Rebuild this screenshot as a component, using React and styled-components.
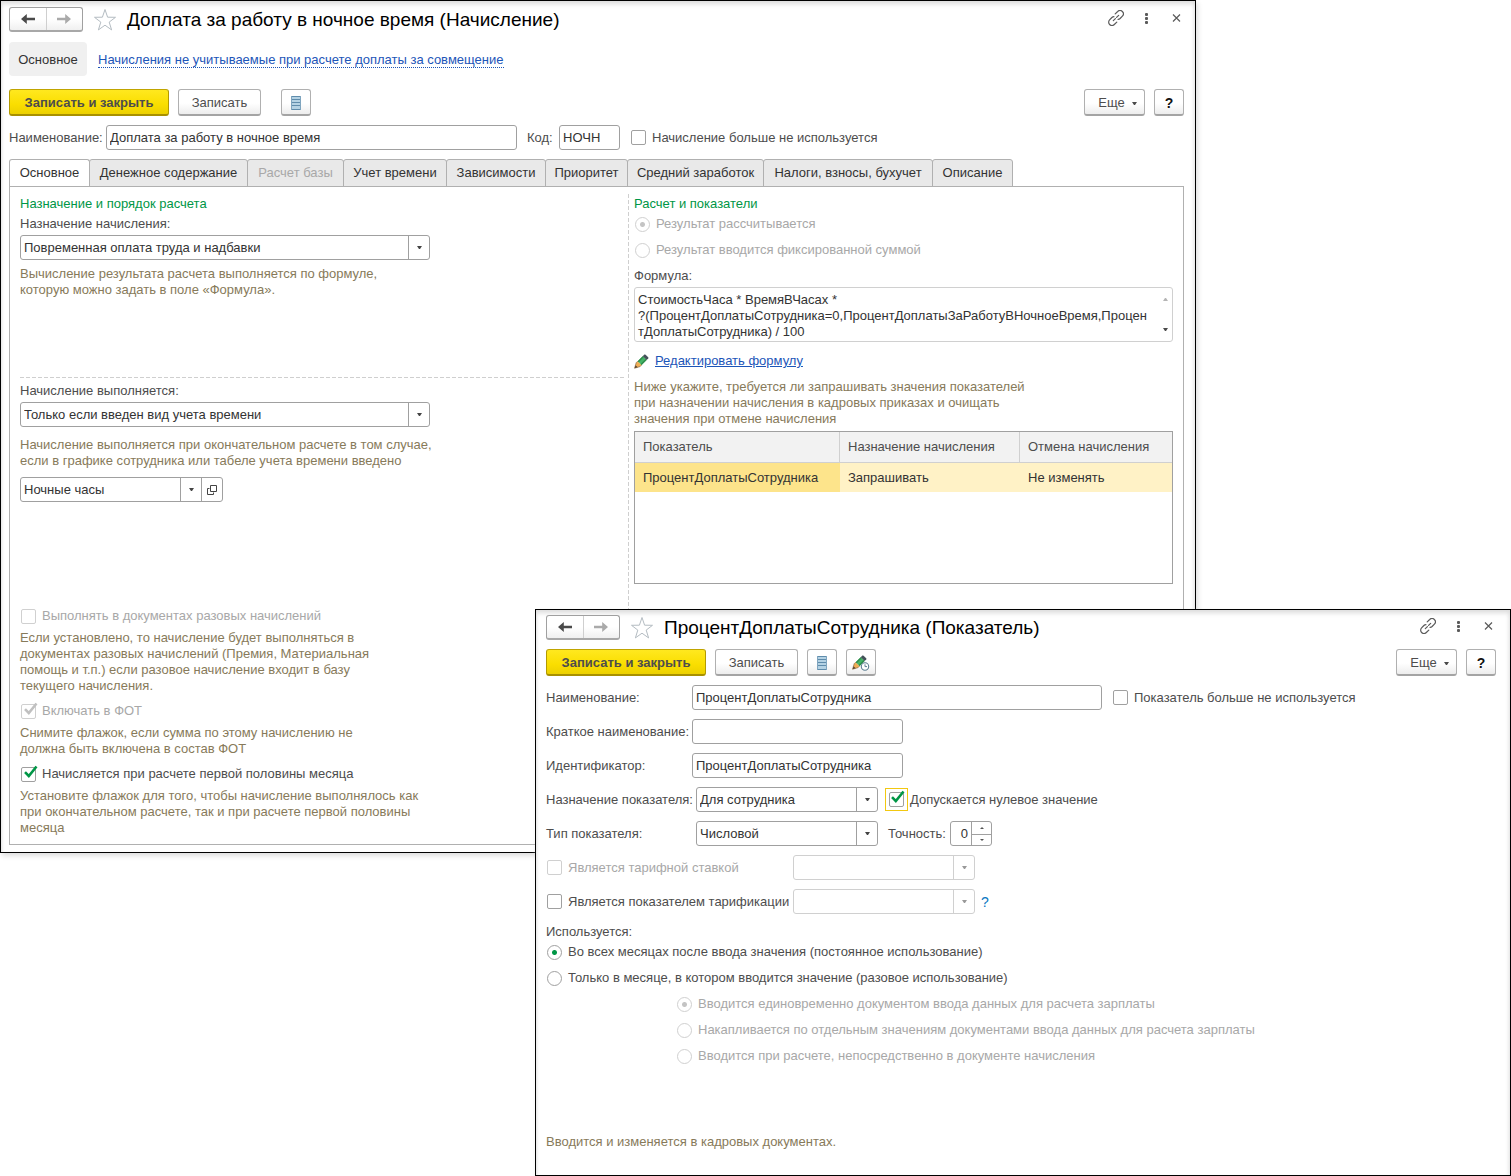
import React from "react";
import styled, { createGlobalStyle, css } from "styled-components";

const color = {
  text: "#4d4d4d",
  value: "#333333",
  muted: "#a8a8a8",
  hint: "#877a5a",
  accent: "#009646",
  link: "#1c55b8",
  line: "#a0a0a0",
  lineSoft: "#d0d0d0",
};

const GlobalStyle = createGlobalStyle`
  *, *::before, *::after { box-sizing: border-box; }
  body {
    margin: 0;
    background: #fff;
    color: ${color.text};
    font: 13px/16px "Liberation Sans", Arial, sans-serif;
  }
  button, input, select, textarea { font: inherit; color: inherit; margin: 0; }
  button { cursor: pointer; }
`;

/* ---------- desktop and windows ---------- */

const Desktop = styled.div`
  position: relative;
  min-height: 100vh;
  overflow: hidden;
`;

const Window = styled.section`
  display: flex;
  flex-direction: column;
  background: #fff;
  border: 1px solid #000;
  box-shadow: inset 0 5px 5px -2px #dcdcdc, inset -4px 0 4px -3px #e2e2e2, inset 3px 0 3px -2px #e6e6e6,
    2px 3px 5px #dedede;
`;

const BackWindow = styled(Window)`
  width: calc(100% - 315px);
  padding: 6px 11px 7px 8px;
`;

const FrontWindow = styled(Window)`
  position: absolute;
  left: 535px;
  right: 0;
  top: 609px;
  padding: 5px 14px 25px 10px;
`;

/* ---------- title bar ---------- */

const TitleBar = styled.header`
  display: flex;
  align-items: center;
  height: 25px;
`;

const NavGroup = styled.div`
  display: flex;
  width: 74px;
  height: 25px;
  border: 1px solid ${color.line};
  border-bottom: 2px solid #a8a8a8;
  border-radius: 3px;
  background: linear-gradient(#fff 50%, #f0f0f0);
`;

const NavButton = styled.button`
  flex: 1;
  display: grid;
  place-items: center;
  padding: 0;
  border: 0;
  background: none;
  color: ${(p) => (p.disabled ? "#aaaaaa" : "#4a4a4a")};
  & + & { border-left: 1px solid #cfcfcf; }
`;

const BareButton = styled.button`
  display: grid;
  place-items: center;
  width: ${(p) => p.$size}px;
  height: ${(p) => p.$size}px;
  padding: 0;
  border: 0;
  background: none;
  color: #5a5a5a;
`;

const StarSlot = styled.div`
  margin: 0 10px;
`;

const Title = styled.h1`
  flex: 1;
  margin: 0;
  color: #000;
  font-size: 19px;
  font-weight: 400;
  line-height: 24px;
  white-space: nowrap;
`;

const TitleActions = styled.div`
  display: flex;
  gap: 14px;
  padding-bottom: 3px;
`;

const ArrowIcon = ({ right }) => (
  <svg width="14" height="12" viewBox="0 0 14 12" fill="currentColor" aria-hidden="true">
    {right ? (
      <path d="M8.2 1 14 6l-5.800 5V7.200H0V4.800h8.200z" />
    ) : (
      <path d="M5.800 1 0 6l5.800 5V7.200H14V4.800H5.800z" />
    )}
  </svg>
);

const StarIcon = () => (
  <svg width="24" height="24" viewBox="0 0 24 24" fill="#fff" stroke="#b4bcc2" strokeWidth="1" aria-hidden="true">
    <path d="M12 1.500 14.600 9.200 22.500 9.300 16.200 14.100 18.600 21.900 12 17.200 5.400 21.900 7.800 14.100 1.500 9.300 9.400 9.200z" />
  </svg>
);

const LinkIcon = () => (
  <svg width="16" height="16" viewBox="0 0 16 16" fill="none" stroke="currentColor" strokeWidth="1.200" strokeLinecap="round" aria-hidden="true">
    <path d="M7.200 3.900 9.700 1.500a3.200 3.200 0 0 1 4.700 4.600l-2.300 2.400a3.200 3.200 0 0 1-2 .9" />
    <path d="M8.800 12.100 6.300 14.500a3.200 3.200 0 0 1-4.700-4.600l2.300-2.400a3.200 3.200 0 0 1 2-.9" />
    <path d="M5.300 10.700 10.700 5.300" strokeDasharray="3 1.600" />
  </svg>
);

const DotsIcon = () => (
  <svg width="16" height="16" viewBox="0 0 16 16" fill="currentColor" aria-hidden="true">
    <rect x="7" y="3" width="3" height="3" rx="1" />
    <rect x="7" y="7" width="3" height="3" rx="1" />
    <rect x="7" y="11" width="3" height="3" rx="1" />
  </svg>
);

const CloseIcon = () => (
  <svg width="16" height="16" viewBox="0 0 16 16" stroke="currentColor" strokeWidth="1.200" aria-hidden="true">
    <path d="M5 4.500l7 7M12 4.500l-7 7" />
  </svg>
);

function WindowTitle({ children }) {
  return (
    <TitleBar>
      <NavGroup>
        <NavButton type="button" aria-label="Назад"><ArrowIcon /></NavButton>
        <NavButton type="button" aria-label="Вперед" disabled><ArrowIcon right /></NavButton>
      </NavGroup>
      <StarSlot>
        <BareButton type="button" $size={24} aria-label="В избранное"><StarIcon /></BareButton>
      </StarSlot>
      <Title>{children}</Title>
      <TitleActions>
        <BareButton type="button" $size={16} aria-label="Получить ссылку"><LinkIcon /></BareButton>
        <BareButton type="button" $size={16} aria-label="Меню"><DotsIcon /></BareButton>
        <BareButton type="button" $size={16} aria-label="Закрыть"><CloseIcon /></BareButton>
      </TitleActions>
    </TitleBar>
  );
}

/* ---------- section links ---------- */

const Sections = styled.nav`
  display: flex;
  align-items: center;
  gap: 11px;
  margin-top: 10px;
`;

const SectionCurrent = styled.span`
  display: grid;
  place-items: center;
  width: 78px;
  height: 34px;
  padding-top: 2px;
  border-radius: 4px;
  background: #f0f0f0;
  color: ${color.value};
`;

const SectionLink = styled.a`
  padding-top: 2px;
  color: ${color.link};
  line-height: 14px;
  text-decoration: none;
  border-bottom: 1px dotted ${color.link};
`;

/* ---------- toolbar ---------- */

const Toolbar = styled.div`
  display: flex;
  gap: 9px;
  margin-top: ${(p) => p.$top}px;
`;

const ToolGap = styled.span`
  width: 2px;
`;

const Spacer = styled.span`
  flex: 1;
`;

const Button = styled.button`
  display: flex;
  align-items: center;
  justify-content: center;
  gap: 7px;
  width: ${(p) => p.$width}px;
  height: 27px;
  padding: ${(p) => (p.$menu ? "2px 0 0 6px" : "2px 0 0")};
  border: 1px solid #b0b0b0;
  border-bottom: 2px solid #a4a4a4;
  border-radius: 3px;
  background: linear-gradient(#fff 55%, #ededed);
  white-space: nowrap;
  ${(p) =>
    p.$primary &&
    css`
      border-color: #c0a400 #b39a00 #a89000;
      background: linear-gradient(#ffe81f, #fade00 60%, #ecd000);
      font-weight: 700;
    `}
  ${(p) => p.$help && css`color: #111; font-weight: 700; font-size: 14px;`}
`;

const DownIcon = ({ tone = "#4a4a4a" }) => (
  <svg width="5" height="3" viewBox="0 0 5 3" fill={tone} aria-hidden="true">
    <path d="M0 0h5L3 3H2z" />
  </svg>
);

const ListIcon = () => (
  <svg width="12" height="14" viewBox="0 0 12 14" aria-hidden="true">
    <path fill="#b4d2e4" d="M1 0h10v14H1z" />
    <path stroke="#5f8cac" d="M1 .5h10M1 3.500h10M1 6.500h10M1 9.500h10M1 13.500h10" />
    <path stroke="#7fa5bf" d="M1.500 0v14M10.500 0v14" />
  </svg>
);

const PencilShape = () => (
  <g>
    <path d="M.6 14.200 2.200 8.700 3.700 7.200 7.600 11.100 6.100 12.600z" fill="#f0ad55" />
    <path d="M.6 14.200 1.500 11.200 3.700 13.200z" fill="#4a4038" />
    <path d="M3.700 7.200 8.700 2.200l3.900 3.900-5 5z" fill="#45b566" />
    <path d="M3.700 7.200 8.700 2.200l1 1-5 5zM6.600 10.100l5-5 1 1-5 5z" fill="#2f8c4c" />
    <path d="M8.700 2.200 10.400.6q.6-.4 1.200.1l2.600 2.500q.5.600 0 1.200l-1.600 1.700z" fill="#45525a" />
    <path d="M.6 14.200 2.200 8.700 3.700 7.200M.6 14.200l5.500-1.600 1.500-1.500" fill="none" stroke="#7a5a34" strokeWidth=".6" />
  </g>
);

const PencilIcon = () => (
  <svg width="15" height="15" viewBox="0 0 15 15" aria-hidden="true"><PencilShape /></svg>
);

const PencilClockIcon = () => (
  <svg width="18" height="16" viewBox="0 0 18 16" aria-hidden="true">
    <PencilShape />
    <circle cx="13" cy="11.500" r="3.700" fill="#fff" stroke="#5f7f92" strokeWidth="1.100" />
    <path d="M13 9.300v2.300h2" fill="none" stroke="#5f7f92" />
  </svg>
);

const MoreButtons = () => (
  <>
    <Spacer />
    <Button type="button" $width={61} $menu>Еще <DownIcon /></Button>
    <Button type="button" $width={30} $help>?</Button>
  </>
);

/* ---------- fields ---------- */

const Row = styled.div`
  display: flex;
  align-items: center;
  min-height: 25px;
`;

const FieldLabel = styled.label`
  flex: none;
  width: ${(p) => (p.$width ? `${p.$width}px` : "auto")};
  white-space: nowrap;
`;

const TextInput = styled.input`
  flex: 0 1 ${(p) => p.$width}px;
  width: ${(p) => p.$width}px;
  min-width: 0;
  height: 25px;
  padding: 0 3px;
  border: 1px solid ${color.line};
  border-radius: 3px;
  background: #fff;
  color: ${color.value};
  outline: 0;
`;

const SelectFrame = styled.span`
  display: flex;
  flex: none;
  width: ${(p) => p.$width}px;
  height: 25px;
  border: 1px solid ${(p) => (p.$disabled ? color.lineSoft : color.line)};
  border-radius: 3px;
  background: #fff;
`;

const SelectBox = styled.span`
  display: grid;
  flex: 1;
  grid-template-columns: 1fr 21px;
`;

const Select = styled.select`
  grid-area: 1 / 1 / 2 / 3;
  width: 100%;
  padding: 0 24px 0 3px;
  border: 0;
  background: none;
  color: ${color.value};
  appearance: none;
  outline: 0;
  opacity: 1;
`;

const SelectArrow = styled.span`
  grid-area: 1 / 2;
  display: grid;
  place-items: center;
  border-left: 1px solid ${(p) => (p.$disabled ? color.lineSoft : color.line)};
  pointer-events: none;
`;

const OpenButton = styled.button`
  display: grid;
  place-items: center;
  width: 21px;
  padding: 0;
  border: 0;
  border-left: 1px solid ${color.line};
  background: none;
`;

const OpenIcon = () => (
  <svg width="10" height="10" viewBox="0 0 10 10" fill="none" stroke="#444" aria-hidden="true">
    <path d="M3.500.5h6v6h-6z" />
    <path d="M2.500 3.500h-2v6h6v-2" />
  </svg>
);

function SelectField({ id, value, width, disabled, label, open }) {
  return (
    <SelectFrame $width={width} $disabled={disabled}>
      <SelectBox>
        <Select id={id} aria-label={label} disabled={disabled} defaultValue={value}>
          <option>{value}</option>
        </Select>
        <SelectArrow $disabled={disabled}><DownIcon tone={disabled ? "#999" : "#444"} /></SelectArrow>
      </SelectBox>
      {open && <OpenButton type="button" aria-label="Открыть"><OpenIcon /></OpenButton>}
    </SelectFrame>
  );
}

const ChoiceLabel = styled.label`
  display: flex;
  align-items: center;
  gap: ${(p) => (p.$framed ? 2 : 6)}px;
  height: 16px;
  padding-left: ${(p) => (p.$framed ? 0 : 1)}px;
  color: ${(p) => (p.$disabled ? color.muted : color.text)};
  white-space: nowrap;
`;

const ChoiceMark = styled.span`
  position: relative;
  display: grid;
  flex: none;
  padding: ${(p) => (p.$framed ? 3 : 0)}px;
  border: ${(p) => (p.$framed ? "1px solid #f2c811" : "0")};
`;

const ChoiceInput = styled.input`
  width: 15px;
  height: 15px;
  border: 1px solid ${(p) => (p.disabled ? color.lineSoft : color.line)};
  border-radius: ${(p) => (p.type === "radio" ? "50%" : "2px")};
  background: #fff;
  appearance: none;
  ${(p) =>
    p.type === "radio" &&
    css`
      &:checked {
        background: radial-gradient(circle, ${p.disabled ? "#c4c4c4" : color.accent} 2px, #fff 3px);
      }
    `}
`;

const Tick = styled.svg`
  position: absolute;
  right: ${(p) => (p.$framed ? 2 : -2)}px;
  top: ${(p) => (p.$framed ? 1 : -2)}px;
  display: none;
  pointer-events: none;
  input:checked + & { display: block; }
`;

function Choice({ type = "checkbox", children, disabled, framed, ...rest }) {
  return (
    <ChoiceLabel $disabled={disabled} $framed={framed}>
      <ChoiceMark $framed={framed}>
        <ChoiceInput type={type} disabled={disabled} {...rest} />
        {type === "checkbox" && (
          <Tick $framed={framed} width="15" height="14" viewBox="0 0 15 14" fill="none" stroke={disabled ? "#c0c0c0" : color.accent} strokeWidth="2.600" aria-hidden="true">
            <path d="M2 7.200 5.800 11 13.500 1.500" />
          </Tick>
        )}
      </ChoiceMark>
      {children}
    </ChoiceLabel>
  );
}

const Hint = styled.p`
  margin: ${(p) => p.$top}px 0 0;
  color: ${color.hint};
  white-space: pre-line;
`;

/* ---------- tabs and panel ---------- */

const NameRow = styled(Row)`
  gap: 10px;
  margin-top: 9px;
`;

const Pair = styled.div`
  display: flex;
  align-items: center;
  gap: 6px;
`;

const Tabs = styled.div`
  display: flex;
  margin-top: 9px;
`;

const Tab = styled.button`
  width: ${(p) => p.$width}px;
  height: 28px;
  margin: 0 -1px -1px 0;
  padding: 0;
  border: 1px solid #b0b0b0;
  border-radius: 3px 3px 0 0;
  background: #e9e9e9;
  color: ${(p) => (p.disabled ? color.muted : color.value)};
  white-space: nowrap;
  ${(p) =>
    p.$active &&
    css`
      border-bottom-color: #fff;
      background: #fff;
    `}
`;

const Panel = styled.div`
  display: grid;
  grid-template-columns: minmax(0, 608px) minmax(0, 1fr);
  padding: 7px 10px 8px;
  border: 1px solid #b0b0b0;
`;

const LeftColumn = styled.div`
  display: flex;
  flex-direction: column;
  padding-top: 2px;
`;

const RightColumn = styled.div`
  display: flex;
  flex-direction: column;
  padding: 2px 0 0 6px;
  background: repeating-linear-gradient(#cfcfcf 0 4px, transparent 4px 6px) 0 0 / 1px 100% no-repeat;
`;

const GroupTitle = styled.h2`
  margin: 0 0 4px;
  color: ${color.accent};
  font-size: 13px;
  font-weight: 400;
  line-height: 16px;
`;

const StackedLabel = styled.label`
  margin-bottom: 3px;
`;

const PurposeBlock = styled.div`
  display: flex;
  flex-direction: column;
  min-height: 181px;
`;

const Divider = styled.hr`
  width: calc(100% - 4px);
  height: 1px;
  margin: 0 0 5px;
  border: 0;
  background: repeating-linear-gradient(90deg, #cfcfcf 0 4px, transparent 4px 6px);
`;

const ModeBlock = styled.div`
  display: flex;
  flex-direction: column;
  gap: 8px;
  margin-bottom: 106px;
`;

const ModeField = styled.div`
  display: flex;
  flex-direction: column;
`;

const OptionBlock = styled.div`
  margin-bottom: ${(p) => (p.$last ? 0 : 9)}px;
`;

const RadioStack = styled.div`
  display: flex;
  flex-direction: column;
  gap: 10px;
  margin-bottom: 10px;
  padding-left: ${(p) => p.$indent || 0}px;
`;

const FormulaBox = styled.div`
  display: flex;
  height: 55px;
  border: 1px solid ${color.lineSoft};
  border-radius: 3px;
`;

const FormulaText = styled.textarea`
  flex: 1;
  min-width: 0;
  padding: 4px 3px 0;
  border: 0;
  background: none;
  color: ${color.value};
  outline: 0;
  overflow: hidden;
  resize: none;
  white-space: pre;
`;

const ScrollRail = styled.div`
  display: flex;
  flex-direction: column;
  justify-content: space-between;
  width: 14px;
  padding: 10px 5px;
`;

const EditRow = styled.div`
  display: flex;
  align-items: center;
  gap: 6px;
  height: 16px;
  margin-top: 11px;
`;

const EditLink = styled.a`
  color: ${color.link};
`;

const TableFrame = styled.div`
  height: 153px;
  margin-top: 4px;
  border: 1px solid ${color.line};
`;

const Table = styled.table`
  width: 100%;
  border-collapse: separate;
  border-spacing: 0;
  table-layout: fixed;
`;

const HeadCell = styled.th`
  width: ${(p) => (p.$width ? `${p.$width}px` : "auto")};
  height: 31px;
  padding: 0 8px;
  border-bottom: 1px solid ${color.lineSoft};
  background: #f2f2f2;
  font-weight: 400;
  text-align: left;
  white-space: nowrap;
  &:not(:last-child) { border-right: 1px solid ${color.lineSoft}; }
`;

const Cell = styled.td`
  height: 29px;
  padding: 0 8px;
  background: ${(p) => (p.$current ? "#fde48b" : "#fff2c6")};
  color: ${color.value};
`;

function BackForm() {
  return (
    <BackWindow>
      <WindowTitle>Доплата за работу в ночное время (Начисление)</WindowTitle>
      <Sections>
        <SectionCurrent>Основное</SectionCurrent>
        <SectionLink href="#exclusions">Начисления не учитываемые при расчете доплаты за совмещение</SectionLink>
      </Sections>
      <Toolbar $top={13}>
        <Button type="button" $width={160} $primary>Записать и закрыть</Button>
        <Button type="button" $width={83}>Записать</Button>
        <ToolGap />
        <Button type="button" $width={30} aria-label="Список"><ListIcon /></Button>
        <MoreButtons />
      </Toolbar>
      <NameRow>
        <Pair>
          <FieldLabel htmlFor="name" $width={91}>Наименование:</FieldLabel>
          <TextInput id="name" $width={411} defaultValue="Доплата за работу в ночное время" />
        </Pair>
        <Pair>
          <FieldLabel htmlFor="code" $width={26}>Код:</FieldLabel>
          <TextInput id="code" $width={61} defaultValue="НОЧН" />
        </Pair>
        <Choice>Начисление больше не используется</Choice>
      </NameRow>
      <Tabs role="tablist">
        <Tab type="button" role="tab" aria-selected="true" $width={81} $active>Основное</Tab>
        <Tab type="button" role="tab" $width={159}>Денежное содержание</Tab>
        <Tab type="button" role="tab" $width={97} disabled>Расчет базы</Tab>
        <Tab type="button" role="tab" $width={104}>Учет времени</Tab>
        <Tab type="button" role="tab" $width={100}>Зависимости</Tab>
        <Tab type="button" role="tab" $width={83}>Приоритет</Tab>
        <Tab type="button" role="tab" $width={137}>Средний заработок</Tab>
        <Tab type="button" role="tab" $width={170}>Налоги, взносы, бухучет</Tab>
        <Tab type="button" role="tab" $width={81}>Описание</Tab>
      </Tabs>
      <Panel>
        <LeftColumn>
          <PurposeBlock>
            <GroupTitle>Назначение и порядок расчета</GroupTitle>
            <StackedLabel htmlFor="purpose">Назначение начисления:</StackedLabel>
            <SelectField id="purpose" width={410} value="Повременная оплата труда и надбавки" />
            <Hint $top={6}>{"Вычисление результата расчета выполняется по формуле,\nкоторую можно задать в поле «Формула»."}</Hint>
          </PurposeBlock>
          <Divider />
          <ModeBlock>
            <ModeField>
              <StackedLabel htmlFor="mode">Начисление выполняется:</StackedLabel>
              <SelectField id="mode" width={410} value="Только если введен вид учета времени" />
            </ModeField>
            <Hint $top={2}>{"Начисление выполняется при окончательном расчете в том случае,\nесли в графике сотрудника или табеле учета времени введено"}</Hint>
            <SelectField width={203} label="Вид учета времени" value="Ночные часы" open />
          </ModeBlock>
          <OptionBlock>
            <Choice disabled>Выполнять в документах разовых начислений</Choice>
            <Hint $top={6}>{"Если установлено, то начисление будет выполняться в\nдокументах разовых начислений (Премия, Материальная\nпомощь и т.п.) если разовое начисление входит в базу\nтекущего начисления."}</Hint>
          </OptionBlock>
          <OptionBlock>
            <Choice disabled defaultChecked>Включать в ФОТ</Choice>
            <Hint $top={6}>{"Снимите флажок, если сумма по этому начислению не\nдолжна быть включена в состав ФОТ"}</Hint>
          </OptionBlock>
          <OptionBlock $last>
            <Choice defaultChecked>Начисляется при расчете первой половины месяца</Choice>
            <Hint $top={6}>{"Установите флажок для того, чтобы начисление выполнялось как\nпри окончательном расчете, так и при расчете первой половины\nмесяца"}</Hint>
          </OptionBlock>
        </LeftColumn>
        <RightColumn>
          <GroupTitle>Расчет и показатели</GroupTitle>
          <RadioStack>
            <Choice type="radio" name="result" disabled defaultChecked>Результат рассчитывается</Choice>
            <Choice type="radio" name="result" disabled>Результат вводится фиксированной суммой</Choice>
          </RadioStack>
          <StackedLabel htmlFor="formula">Формула:</StackedLabel>
          <FormulaBox>
            <FormulaText
              id="formula"
              readOnly
              value={"СтоимостьЧаса * ВремяВЧасах *\n?(ПроцентДоплатыСотрудника=0,ПроцентДоплатыЗаРаботуВНочноеВремя,Процен\nтДоплатыСотрудника) / 100"}
            />
            <ScrollRail>
              <svg width="5" height="3" viewBox="0 0 5 3" fill="#b5b5b5" aria-hidden="true"><path d="M0 3h5L3 0H2z" /></svg>
              <DownIcon />
            </ScrollRail>
          </FormulaBox>
          <EditRow>
            <PencilIcon />
            <EditLink href="#formula">Редактировать формулу</EditLink>
          </EditRow>
          <Hint $top={10}>{"Ниже укажите, требуется ли запрашивать значения показателей\nпри назначении начисления в кадровых приказах и очищать\nзначения при отмене начисления"}</Hint>
          <TableFrame>
            <Table>
              <thead>
                <tr>
                  <HeadCell $width={205}>Показатель</HeadCell>
                  <HeadCell $width={180}>Назначение начисления</HeadCell>
                  <HeadCell>Отмена начисления</HeadCell>
                </tr>
              </thead>
              <tbody>
                <tr>
                  <Cell $current>ПроцентДоплатыСотрудника</Cell>
                  <Cell>Запрашивать</Cell>
                  <Cell>Не изменять</Cell>
                </tr>
              </tbody>
            </Table>
          </TableFrame>
        </RightColumn>
      </Panel>
    </BackWindow>
  );
}

/* ---------- indicator form ---------- */

const Fields = styled.div`
  display: flex;
  flex-direction: column;
  gap: 9px;
  margin-top: 9px;
`;

const Aside = styled.div`
  display: flex;
  align-items: center;
  margin-left: ${(p) => p.$gap}px;
`;

const ChoiceColumn = styled.div`
  width: 247px;
`;

const NumberFrame = styled.span`
  display: flex;
  width: 42px;
  height: 25px;
  border: 1px solid ${color.line};
  border-radius: 3px;
`;

const NumberInput = styled.input`
  width: 20px;
  padding: 0 3px 0 0;
  border: 0;
  background: none;
  color: ${color.value};
  outline: 0;
  text-align: right;
  appearance: textfield;
  &::-webkit-inner-spin-button { appearance: none; }
`;

const Stepper = styled.span`
  display: grid;
  flex: 1;
  grid-template-rows: 1fr 1fr;
  border-left: 1px solid ${color.line};
`;

const StepButton = styled.button`
  display: grid;
  place-items: center;
  padding: 0;
  border: 0;
  background: none;
  & + & { border-top: 1px solid ${color.line}; }
`;

const HelpLink = styled.a`
  margin-left: 6px;
  color: #0a78c2;
  font-size: 14px;
  text-decoration: none;
`;

const UsageLabel = styled.p`
  margin: 10px 0 4px;
`;

const Footnote = styled(Hint)`
  white-space: normal;
`;

function FrontForm() {
  return (
    <FrontWindow>
      <WindowTitle>ПроцентДоплатыСотрудника (Показатель)</WindowTitle>
      <Toolbar $top={9}>
        <Button type="button" $width={160} $primary>Записать и закрыть</Button>
        <Button type="button" $width={83}>Записать</Button>
        <Button type="button" $width={30} aria-label="Список"><ListIcon /></Button>
        <Button type="button" $width={30} aria-label="История изменений"><PencilClockIcon /></Button>
        <MoreButtons />
      </Toolbar>
      <Fields>
        <Row>
          <FieldLabel htmlFor="ind-name" $width={146}>Наименование:</FieldLabel>
          <TextInput id="ind-name" $width={410} defaultValue="ПроцентДоплатыСотрудника" />
          <Aside $gap={10}><Choice>Показатель больше не используется</Choice></Aside>
        </Row>
        <Row>
          <FieldLabel htmlFor="ind-short" $width={146}>Краткое наименование:</FieldLabel>
          <TextInput id="ind-short" $width={211} />
        </Row>
        <Row>
          <FieldLabel htmlFor="ind-id" $width={146}>Идентификатор:</FieldLabel>
          <TextInput id="ind-id" $width={211} defaultValue="ПроцентДоплатыСотрудника" />
        </Row>
        <Row>
          <FieldLabel htmlFor="ind-purpose" $width={150}>Назначение показателя:</FieldLabel>
          <SelectField id="ind-purpose" width={182} value="Для сотрудника" />
          <Aside $gap={7}><Choice framed defaultChecked>Допускается нулевое значение</Choice></Aside>
        </Row>
        <Row>
          <FieldLabel htmlFor="ind-type" $width={150}>Тип показателя:</FieldLabel>
          <SelectField id="ind-type" width={182} value="Числовой" />
          <Aside $gap={10}>
            <FieldLabel htmlFor="precision" $width={62}>Точность:</FieldLabel>
            <NumberFrame>
              <NumberInput id="precision" type="number" defaultValue="0" />
              <Stepper>
                <StepButton type="button" aria-label="Больше">
                  <svg width="4" height="2" viewBox="0 0 4 2" fill="#555" aria-hidden="true"><path d="M0 2h4L2 0z" /></svg>
                </StepButton>
                <StepButton type="button" aria-label="Меньше">
                  <svg width="4" height="2" viewBox="0 0 4 2" fill="#555" aria-hidden="true"><path d="M0 0h4L2 2z" /></svg>
                </StepButton>
              </Stepper>
            </NumberFrame>
          </Aside>
        </Row>
        <Row>
          <ChoiceColumn><Choice disabled>Является тарифной ставкой</Choice></ChoiceColumn>
          <SelectField width={182} label="Тарифная ставка" value="" disabled />
        </Row>
        <Row>
          <ChoiceColumn><Choice>Является показателем тарификации</Choice></ChoiceColumn>
          <SelectField width={182} label="Показатель тарификации" value="" disabled />
          <HelpLink href="#help">?</HelpLink>
        </Row>
      </Fields>
      <UsageLabel>Используется:</UsageLabel>
      <RadioStack>
        <Choice type="radio" name="usage" defaultChecked>Во всех месяцах после ввода значения (постоянное использование)</Choice>
        <Choice type="radio" name="usage">Только в месяце, в котором вводится значение (разовое использование)</Choice>
      </RadioStack>
      <RadioStack $indent={130}>
        <Choice type="radio" name="entry" disabled defaultChecked>Вводится единовременно документом ввода данных для расчета зарплаты</Choice>
        <Choice type="radio" name="entry" disabled>Накапливается по отдельным значениям документами ввода данных для расчета зарплаты</Choice>
        <Choice type="radio" name="entry" disabled>Вводится при расчете, непосредственно в документе начисления</Choice>
      </RadioStack>
      <Footnote $top={60}>Вводится и изменяется в кадровых документах.</Footnote>
    </FrontWindow>
  );
}

export default function App() {
  return (
    <>
      <GlobalStyle />
      <Desktop>
        <BackForm />
        <FrontForm />
      </Desktop>
    </>
  );
}
